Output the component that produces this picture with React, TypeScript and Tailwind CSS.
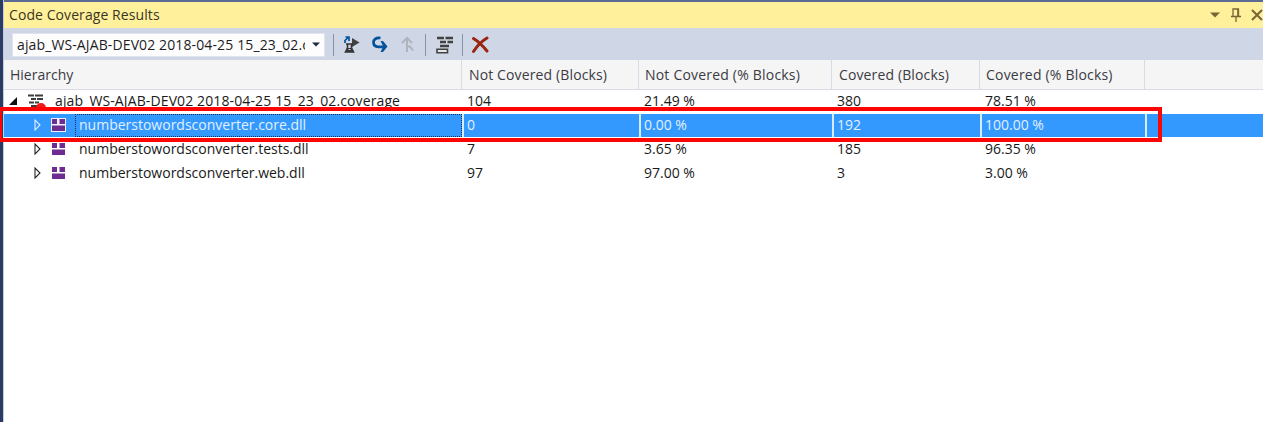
import React from "react";

type Row = { name: string; values: string[]; selected?: boolean };

const assemblies: Row[] = [
  { name: "numberstowordsconverter.core.dll", values: ["0", "0.00 %", "192", "100.00 %"], selected: true },
  { name: "numberstowordsconverter.tests.dll", values: ["7", "3.65 %", "185", "96.35 %"] },
  { name: "numberstowordsconverter.web.dll", values: ["97", "97.00 %", "3", "3.00 %"] },
];

const columns = "grid grid-cols-[458px_177px_193px_148px_165px_1fr]";

function Separator() {
  return <div className="h-[22px] w-px bg-[#8592a8]" />;
}

function CoverageIcon() {
  return (
    <svg width="18" height="16" viewBox="0 0 18 16" className="shrink-0">
      <path d="M0 1.500h6M7 1.500h8M3 5h5M9 5h6M1 8.500h5M7 8.500h4M3 12h6M3 15h7" stroke="#3c3c3c" strokeWidth="2" />
      <path d="M8 14a5 5 0 0 1 10 0v2H8z" fill="#f01818" />
    </svg>
  );
}

function AssemblyIcon({ selected }: { selected?: boolean }) {
  return (
    <svg width="15" height="14" viewBox="0 0 15 14" className="shrink-0">
      {selected && <path d="M0 0h15v14H0z" fill="#f0f0fa" />}
      <path d="M1 1h5v5H1zM8.500 1H14v5H8.500zM1 7.500h13V13H1z" fill="#6c2c91" />
    </svg>
  );
}

function Toolbar() {
  return (
    <div className="flex h-8 items-center bg-[#cfd6e5] pl-2 pt-px">
      <div className="flex h-6 w-[313px] items-center border border-[#dfe5f0] bg-[#fdfdfe] pl-1">
        <span className="w-[288px] overflow-hidden whitespace-pre text-[14px] leading-[22px] tracking-[0.12px] text-[#1e1e1e]">
          ajab_WS-AJAB-DEV02 2018-04-25 15_23_02.coverage
        </span>
        <svg width="8" height="5" viewBox="0 0 8 5" className="ml-[7px] shrink-0">
          <path d="M0 .5h8l-4 4z" fill="#1e2a3c" />
        </svg>
      </div>
      <div className="ml-2"><Separator /></div>
      <svg width="16" height="18" viewBox="0 0 16 18" className="ml-[10px]">
        <path d="M1 7V4.500L4 1.500M1.500 1H5v4" fill="none" stroke="#00539c" strokeWidth="1.700" />
        <path d="M8 2l7.500 4.500L8 11z" fill="#424242" />
        <path d="M2 8h7M3.500 8v4L1.500 16h8L7.500 12V8" fill="none" stroke="#353535" strokeWidth="1.600" />
        <path d="M3 12h5l1.500 4h-8z" fill="#353535" />
        <path d="M4.500 13.500h2" stroke="#cfd6e5" />
      </svg>
      <svg width="16" height="17" viewBox="0 0 16 17" className="ml-3">
        <path d="M8.500 2C4 1 1.500 4 1.500 6.300c0 3.200 2.500 4.500 5 4.500H12" fill="none" stroke="#00539c" strokeWidth="2.700" />
        <path d="M8.500 5h2.500l4.500 5.500-4.500 5.500H8.500l2.800-5.500z" fill="#00539c" />
      </svg>
      <svg width="14" height="17" viewBox="0 0 14 17" className="ml-[13px]">
        <path d="M1 7l5-5 5 5M6 2.500V16M6.500 10.500h2.500l3 4" fill="none" stroke="#b0b4bd" strokeWidth="2" />
      </svg>
      <div className="ml-[10px]"><Separator /></div>
      <svg width="18" height="18" viewBox="0 0 18 18" className="ml-[10px]">
        <path d="M1 2h7M9.500 2H17M4 6h6M11.500 6H17M4 10h9" stroke="#424242" strokeWidth="2.400" />
        <path d="M1 13.200h10.500v3.500H1z" fill="#e2e5eb" stroke="#424242" strokeWidth="1.600" />
      </svg>
      <div className="ml-2"><Separator /></div>
      <svg width="19" height="18" viewBox="0 0 19 18" className="ml-[8px]">
        <path d="M2.500 2.500c5 3 9 7 13.500 12.500M16 2C11 5 6 10 2.500 15.500" fill="none" stroke="#9b2410" strokeWidth="3" strokeLinecap="round" />
      </svg>
    </div>
  );
}

function AssemblyRow({ name, values, selected }: Row) {
  const text = selected ? "text-[#e2f0ff]" : "text-[#1a1a1a]";
  return (
    <div className={`${columns} h-[23px] ${selected ? "bg-[#3399ff]" : ""} ${text}`}>
      <div className="flex items-center pl-[30px]">
        <svg width="8" height="12" viewBox="0 0 8 12" className="mb-[2px] shrink-0">
          <path d="M1 1v10l5-5z" fill={selected ? "#3399ff" : "#fff"} stroke={selected ? "#e2f0ff" : "#222"} strokeWidth="1.100" />
        </svg>
        <div className="mb-px ml-[9px]"><AssemblyIcon selected={selected} /></div>
        <div className={`ml-[9px] flex h-[23px] flex-1 items-center pb-[2px] pl-[3px] ${selected ? "border border-dotted border-[#102e55]" : "border border-transparent"}`}>
          <span className="whitespace-pre tracking-[0px]">{name}</span>
        </div>
      </div>
      {values.map((value, i) => (
        <div key={i} className={`flex items-center border-l-2 pb-[2px] pl-[3px] ${selected ? "border-[#d9ecff]" : "border-transparent"}`}>
          {value}
        </div>
      ))}
      <div className={`border-l-2 ${selected ? "border-[#d9ecff]" : "border-transparent"}`} />
    </div>
  );
}

export default function App() {
  return (
    <div className="relative flex h-[422px] w-[1263px] overflow-hidden bg-white font-['Open_Sans',sans-serif] text-[14px] leading-5">
      <div className="w-1 shrink-0 border-r border-[#c3cceb] bg-[#2c3c60]" />
      <main className="min-w-0 flex-1">
        <div className="h-[2px] bg-[#5b6b93]" />
        <header className="flex h-[26px] items-center bg-[#fff09c] pl-[5px] text-[#3a351f]">
          <h1 className="tracking-[0.08px]">Code Coverage Results</h1>
          <div className="ml-auto flex items-center text-[#766535]">
            <svg width="10" height="6" viewBox="0 0 10 6"><path d="M0 .5h10l-5 5z" fill="currentColor" /></svg>
            <svg width="10" height="14" viewBox="0 0 10 14" className="ml-[11px]">
              <path d="M2 8V1h5.500v7M0 8.500h10M5 9v5" fill="none" stroke="currentColor" strokeWidth="1.300" />
              <path d="M6.200 1H8v7H6.200z" fill="currentColor" />
            </svg>
            <svg width="12" height="12" viewBox="0 0 12 12" className="ml-[10px]">
              <path d="M1 1l10 10M11 1L1 11" stroke="currentColor" strokeWidth="2" />
            </svg>
          </div>
        </header>
        <Toolbar />
        <div className={`${columns} h-[30px] border-b border-[#dadce6] bg-[#f5f5f6] text-[#3b3b43]`}>
          <div className="flex items-center border-r border-[#d8dae5] pl-[6px]">Hierarchy</div>
          <div className="flex items-center border-r border-[#d8dae5] pl-[7px] tracking-[0.13px]">Not Covered (Blocks)</div>
          <div className="flex items-center border-r border-[#d8dae5] pl-[6px] tracking-[0.2px]">Not Covered (% Blocks)</div>
          <div className="flex items-center border-r border-[#d8dae5] pl-[7px] tracking-[0.13px]">Covered (Blocks)</div>
          <div className="flex items-center border-r border-[#d8dae5] pl-[6px] tracking-[0.2px]">Covered (% Blocks)</div>
          <div />
        </div>
        <div className={`${columns} h-6 text-[#1a1a1a]`}>
          <div className="flex items-center pb-[2px] pl-[5px]">
            <svg width="9" height="8" viewBox="0 0 9 8" className="shrink-0"><path d="M8 0v8H0z" fill="#111" /></svg>
            <div className="ml-[10px] mt-px"><CoverageIcon /></div>
            <span className="ml-[9px] whitespace-pre tracking-[0.12px]">ajab_WS-AJAB-DEV02 2018-04-25 15_23_02.coverage</span>
          </div>
          {["104", "21.49 %", "380", "78.51 %"].map((value) => (
            <div key={value} className="flex items-center pb-[2px] pl-[5px]">{value}</div>
          ))}
        </div>
        <div className="flex flex-col gap-px">
          {assemblies.map((row) => <AssemblyRow key={row.name} {...row} />)}
        </div>
      </main>
      <div className="absolute -left-[2px] top-[107px] h-[35px] w-[1164px] border-4 border-[#fb0505]" />
    </div>
  );
}
